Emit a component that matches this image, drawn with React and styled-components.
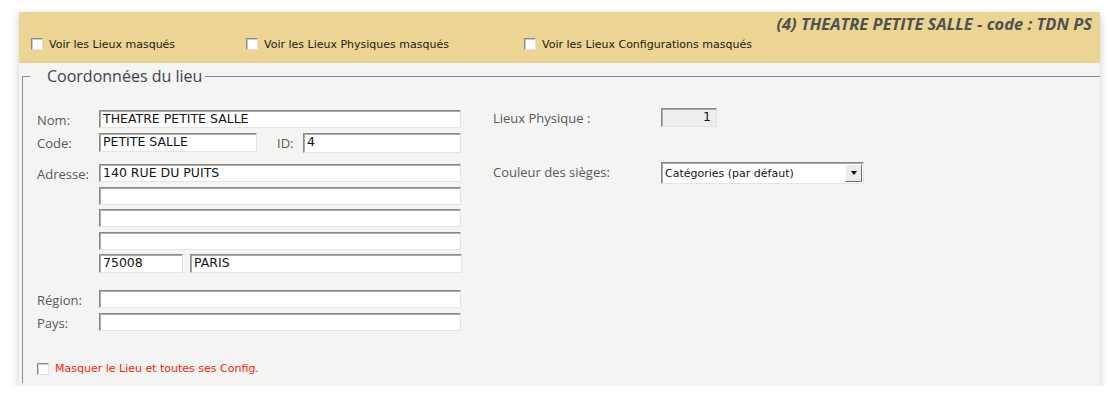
import React from "react";
import styled, { createGlobalStyle } from "styled-components";

const GlobalStyle = createGlobalStyle`
  html, body {
    margin: 0;
    padding: 0;
    background: #ffffff;
  }
`;

const Panel = styled.div`
  margin: 12px 0 0 19px;
  width: 1081px;
  height: 374px;
  background: #f4f4f2;
  box-shadow: 0 3px 8px rgba(0, 0, 0, 0.22);
  display: flex;
  flex-direction: column;
`;

const Header = styled.div`
  height: 51px;
  background: #ecd592;
  display: flex;
  flex-direction: column;
`;

const Title = styled.div`
  height: 21px;
  padding: 1px 8px 0 0;
  line-height: 21px;
  text-align: right;
  font-family: "Open Sans", sans-serif;
  font-style: italic;
  font-weight: 700;
  font-size: 16.5px;
  color: #4d5253;
`;

const FilterRow = styled.div`
  display: flex;
  align-items: center;
  height: 20px;
  padding-left: 12px;
`;

const CheckItem = styled.label`
  display: flex;
  align-items: center;
  gap: 6px;
  width: ${(p) => (p.$width ? `${p.$width}px` : "auto")};
  font-family: "DejaVu Sans", Tahoma, sans-serif;
  font-size: 11px;
  color: ${(p) => (p.$danger ? "#ff1a0a" : "#1a1a1a")};
`;

const Box = styled.span`
  box-sizing: border-box;
  width: 12px;
  height: 12px;
  flex: none;
  background: #ffffff;
  border: 1px solid;
  border-color: #8a8a8a #e2e2e2 #e2e2e2 #8a8a8a;
  box-shadow: inset 1px 1px 0 #c9c9c9;
`;

const Body = styled.div`
  flex: 1;
  display: flex;
  padding: 0 0 3px 3px;
`;

const Fieldset = styled.fieldset`
  flex: 1;
  min-width: 0;
  margin: 4px 0 0 0;
  padding: 0;
  border: none;
  border-top: 1px solid #8a8a8a;
  border-left: 1px solid #8a8a8a;
`;

const Legend = styled.legend`
  margin-left: 7px;
  padding: 0 3px 0 17px;
  line-height: 18px;
  font-family: "Open Sans", sans-serif;
  font-size: 16px;
  color: #3f4446;
`;

const Content = styled.div`
  display: flex;
  align-items: flex-start;
  padding: 25px 0 0 14px;
`;

const LeftCol = styled.div`
  width: 424px;
  display: flex;
  flex-direction: column;
`;

const Row = styled.div`
  display: flex;
  align-items: flex-start;
  gap: ${(p) => p.$gap || 0}px;
  margin-top: ${(p) => p.$top || 0}px;
`;

const Label = styled.span`
  width: ${(p) => p.$width}px;
  flex: none;
  margin-left: ${(p) => p.$indent || 0}px;
  padding-top: 3px;
  font-family: "Open Sans", sans-serif;
  font-size: 13px;
  line-height: 15px;
  color: #555a5c;
`;

const Field = styled.div`
  box-sizing: border-box;
  width: ${(p) => p.$width}px;
  height: ${(p) => p.$height || 18}px;
  flex: none;
  padding-left: ${(p) => (p.$right ? 0 : 3)}px;
  padding-right: ${(p) => (p.$right ? 5 : 0)}px;
  text-align: ${(p) => (p.$right ? "right" : "left")};
  background: ${(p) => (p.$readOnly ? "#efefef" : "#ffffff")};
  border: 1px solid;
  border-color: #8a8a8a #e4e4e4 #e4e4e4 #8a8a8a;
  box-shadow: inset 1px 1px 0 #a8a8a8;
  font-family: "DejaVu Sans", Tahoma, sans-serif;
  font-size: 12.5px;
  line-height: 16px;
  color: #141414;
  white-space: nowrap;
  overflow: hidden;
`;

const AddressStack = styled.div`
  display: flex;
  flex-direction: column;
  gap: 4.5px;
`;

const Hide = styled.div`
  margin-top: 31px;
`;

const RightCol = styled.div`
  margin: -2px 0 0 32px;
  display: flex;
  flex-direction: column;
`;

const Select = styled.div`
  box-sizing: border-box;
  width: 203px;
  height: 22px;
  display: flex;
  align-items: center;
  background: #ffffff;
  border: 1px solid;
  border-color: #8a8a8a #e4e4e4 #e4e4e4 #8a8a8a;
  box-shadow: inset 1px 1px 0 #a8a8a8;
`;

const SelectText = styled.span`
  flex: 1;
  padding-left: 3px;
  font-family: "DejaVu Sans", Tahoma, sans-serif;
  font-size: 11px;
  color: #141414;
`;

const ArrowButton = styled.span`
  box-sizing: border-box;
  width: 17px;
  height: 18px;
  margin-right: 1px;
  display: flex;
  align-items: center;
  justify-content: center;
  background: #ececec;
  border: 1px solid;
  border-color: #ffffff #6e6e6e #6e6e6e #ffffff;
`;

const Arrow = styled.span`
  width: 0;
  height: 0;
  border-left: 3.5px solid transparent;
  border-right: 3.5px solid transparent;
  border-top: 4px solid #000000;
`;

const Check = ({ label, width, danger }) => (
  <CheckItem $width={width} $danger={danger}>
    <Box />
    {label}
  </CheckItem>
);

export default function App() {
  return (
    <>
      <GlobalStyle />
      <Panel>
        <Header>
          <Title>(4) THEATRE PETITE SALLE - code : TDN PS</Title>
          <FilterRow>
            <Check label="Voir les Lieux masqués" width={215} />
            <Check label="Voir les Lieux Physiques masqués" width={278} />
            <Check label="Voir les Lieux Configurations masqués" />
          </FilterRow>
        </Header>
        <Body>
          <Fieldset>
            <Legend>Coordonnées du lieu</Legend>
            <Content>
              <LeftCol>
                <Row>
                  <Label $width={62}>Nom:</Label>
                  <Field $width={362}>THEATRE PETITE SALLE</Field>
                </Row>
                <Row $top={5}>
                  <Label $width={62}>Code:</Label>
                  <Field $width={158} $height={19}>PETITE SALLE</Field>
                  <Label $width={26} $indent={20}>ID:</Label>
                  <Field $width={158} $height={20}>4</Field>
                </Row>
                <Row $top={11}>
                  <Label $width={62}>Adresse:</Label>
                  <AddressStack>
                    <Field $width={362}>140 RUE DU PUITS</Field>
                    <Field $width={362} />
                    <Field $width={362} />
                    <Field $width={362} />
                    <Row $gap={7}>
                      <Field $width={84} $height={19}>75008</Field>
                      <Field $width={272} $height={19}>PARIS</Field>
                    </Row>
                  </AddressStack>
                </Row>
                <Row $top={17}>
                  <Label $width={62}>Région:</Label>
                  <Field $width={362}>&nbsp;</Field>
                </Row>
                <Row $top={5}>
                  <Label $width={62}>Pays:</Label>
                  <Field $width={362}>&nbsp;</Field>
                </Row>
                <Hide>
                  <Check label="Masquer le Lieu et toutes ses Config." danger />
                </Hide>
              </LeftCol>
              <RightCol>
                <Row>
                  <Label $width={168}>Lieux Physique :</Label>
                  <Field $width={56} $height={19} $readOnly $right>1</Field>
                </Row>
                <Row $top={35}>
                  <Label $width={168}>Couleur des sièges:</Label>
                  <Select>
                    <SelectText>Catégories (par défaut)</SelectText>
                    <ArrowButton>
                      <Arrow />
                    </ArrowButton>
                  </Select>
                </Row>
              </RightCol>
            </Content>
          </Fieldset>
        </Body>
      </Panel>
    </>
  );
}
